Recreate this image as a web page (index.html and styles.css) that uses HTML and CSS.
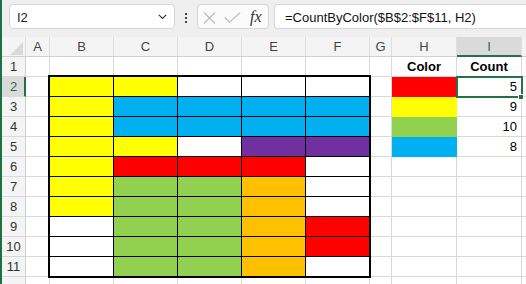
FILE: index.html
```html
<!DOCTYPE html>
<html>
<head>
<meta charset="utf-8">
<link rel="stylesheet" href="styles.css">
</head>
<body>
<div class="app">
  <div class="toolbar">
    <div class="namebox">
      <span class="name">I2</span>
      <svg class="chev" width="9" height="6" viewBox="0 0 9 6"><path d="M0.8 0.8 L4.5 4.5 L8.2 0.8" fill="none" stroke="#333" stroke-width="1.1"/></svg>
    </div>
    <div class="dots"><span></span><span></span><span></span></div>
    <div class="fbtns">
      <svg class="xic" width="13" height="12" viewBox="0 0 13 12"><path d="M1 0.5 L12 11.5 M12 0.5 L1 11.5" stroke="#bcbcbc" stroke-width="1.2" fill="none"/></svg>
      <svg class="chk" width="17" height="11" viewBox="0 0 17 11"><path d="M0.8 5.5 L5.5 10.2 L16.2 0.6" stroke="#bcbcbc" stroke-width="1.2" fill="none"/></svg>
      <span class="fx">fx</span>
    </div>
    <div class="formula">=CountByColor($B$2:$F$11, H2)</div>
  </div>
  <div class="sheet">
    <!-- header row -->
    <div class="c hd corner"><svg width="13" height="13" viewBox="0 0 13 13"><path d="M13 0 L13 13 L0 13 Z" fill="#d9d9d9"/></svg></div>
    <div class="c hd">A</div>
    <div class="c hd">B</div>
    <div class="c hd">C</div>
    <div class="c hd">D</div>
    <div class="c hd">E</div>
    <div class="c hd">F</div>
    <div class="c hd">G</div>
    <div class="c hd">H</div>
    <div class="c hd hd-sel">I</div>
    <div class="c hd"></div>

    <!-- row 1 -->
    <div class="c rh">1</div>
    <div class="c"></div>
    <div class="c"></div>
    <div class="c"></div>
    <div class="c"></div>
    <div class="c"></div>
    <div class="c"></div>
    <div class="c"></div>
    <div class="c bold center">Color</div>
    <div class="c bold center">Count</div>
    <div class="c"></div>

    <!-- B2:F11 range -->
    <div class="range">
      <div class="k y"></div><div class="k y"></div><div class="k"></div><div class="k"></div><div class="k"></div>
      <div class="k y"></div><div class="k bl"></div><div class="k bl"></div><div class="k bl"></div><div class="k bl"></div>
      <div class="k y"></div><div class="k bl"></div><div class="k bl"></div><div class="k bl"></div><div class="k bl"></div>
      <div class="k y"></div><div class="k y"></div><div class="k"></div><div class="k p"></div><div class="k p"></div>
      <div class="k y"></div><div class="k r"></div><div class="k r"></div><div class="k r"></div><div class="k"></div>
      <div class="k y"></div><div class="k g"></div><div class="k g"></div><div class="k o"></div><div class="k"></div>
      <div class="k y"></div><div class="k g"></div><div class="k g"></div><div class="k o"></div><div class="k"></div>
      <div class="k"></div><div class="k g"></div><div class="k g"></div><div class="k o"></div><div class="k r"></div>
      <div class="k"></div><div class="k g"></div><div class="k g"></div><div class="k o"></div><div class="k r"></div>
      <div class="k"></div><div class="k g"></div><div class="k g"></div><div class="k o"></div><div class="k"></div>
    </div>

    <!-- row 2 -->
    <div class="c rh rh-sel">2</div>
    <div class="c"></div>
    <div class="c"></div>
    <div class="c fill r"></div>
    <div class="c num sel">5</div>
    <div class="c"></div>
    <!-- row 3 -->
    <div class="c rh">3</div>
    <div class="c"></div>
    <div class="c"></div>
    <div class="c fill y"></div>
    <div class="c num">9</div>
    <div class="c"></div>
    <!-- row 4 -->
    <div class="c rh">4</div>
    <div class="c"></div>
    <div class="c"></div>
    <div class="c fill g"></div>
    <div class="c num">10</div>
    <div class="c"></div>
    <!-- row 5 -->
    <div class="c rh">5</div>
    <div class="c"></div>
    <div class="c"></div>
    <div class="c fill bl"></div>
    <div class="c num">8</div>
    <div class="c"></div>
    <!-- row 6 -->
    <div class="c rh">6</div>
    <div class="c"></div>
    <div class="c"></div>
    <div class="c"></div>
    <div class="c"></div>
    <div class="c"></div>
    <!-- row 7 -->
    <div class="c rh">7</div>
    <div class="c"></div>
    <div class="c"></div>
    <div class="c"></div>
    <div class="c"></div>
    <div class="c"></div>
    <!-- row 8 -->
    <div class="c rh">8</div>
    <div class="c"></div>
    <div class="c"></div>
    <div class="c"></div>
    <div class="c"></div>
    <div class="c"></div>
    <!-- row 9 -->
    <div class="c rh">9</div>
    <div class="c"></div>
    <div class="c"></div>
    <div class="c"></div>
    <div class="c"></div>
    <div class="c"></div>
    <!-- row 10 -->
    <div class="c rh">10</div>
    <div class="c"></div>
    <div class="c"></div>
    <div class="c"></div>
    <div class="c"></div>
    <div class="c"></div>
    <!-- row 11 -->
    <div class="c rh">11</div>
    <div class="c"></div>
    <div class="c"></div>
    <div class="c"></div>
    <div class="c"></div>
    <div class="c"></div>
    <!-- row 12 -->
    <div class="c rh"></div>
    <div class="c"></div>
    <div class="c"></div>
    <div class="c"></div>
    <div class="c"></div>
    <div class="c"></div>
    <div class="c"></div>
    <div class="c"></div>
    <div class="c"></div>
    <div class="c"></div>
    <div class="c"></div>
  </div>
</div>
</body>
</html>
```

FILE: styles.css
```css
html, body {
  margin: 0;
  padding: 0;
  background: #ffffff;
  overflow: hidden;
}

body {
  font-family: "Liberation Sans", Arial, sans-serif;
  color: #000;
}

.app {
  border-left: 2px solid #1e7145;
  height: 284px;
  box-sizing: border-box;
  overflow: hidden;
}

/* ---------- formula toolbar ---------- */
.toolbar {
  height: 37px;
  box-sizing: border-box;
  background: #efefef;
  display: flex;
  align-items: flex-start;
  padding: 4px 0 0 7px;
}

.namebox {
  width: 166px;
  height: 25px;
  box-sizing: border-box;
  border: 1px solid #d5d5d5;
  border-radius: 4px;
  background: #fff;
  display: flex;
  align-items: center;
  justify-content: space-between;
  padding: 2px 7px 0 7px;
  font-size: 13px;
  color: #222;
}

.chev {
  display: block;
  margin-top: -1px;
}

.dots {
  margin-left: 10px;
  padding-top: 9px;
  display: flex;
  flex-direction: column;
  gap: 2px;
}

.dots span {
  display: block;
  width: 2px;
  height: 2px;
  background: #444;
}

.fbtns {
  margin-left: 10px;
  width: 72px;
  height: 25px;
  box-sizing: border-box;
  border: 1px solid #d5d5d5;
  border-radius: 4px;
  background: #fbfbfb;
  display: flex;
  align-items: center;
  padding-left: 5px;
}

.xic {
  display: block;
  margin-top: 2px;
}

.chk {
  display: block;
  margin-left: 8px;
  margin-top: 1px;
}

.fx {
  margin-left: 9px;
  font-family: "Liberation Serif", "Times New Roman", serif;
  font-style: italic;
  font-size: 16px;
  color: #333;
  margin-top: 1px;
}

.formula {
  margin-left: 5px;
  flex: 1;
  height: 25px;
  box-sizing: border-box;
  border: 1px solid #d5d5d5;
  border-right: none;
  border-radius: 4px 0 0 4px;
  background: #fff;
  display: flex;
  align-items: center;
  padding: 2px 0 0 10px;
  font-size: 13px;
  color: #111;
  white-space: nowrap;
}

/* ---------- grid ---------- */
.sheet {
  display: grid;
  grid-template-columns: 24px 24px repeat(5, 64px) 22px 65px 65px 1fr;
  grid-auto-rows: 20px;
}

.c {
  box-sizing: border-box;
  border-right: 1px solid #d9d9d9;
  border-bottom: 1px solid #d9d9d9;
  font-size: 13px;
  display: flex;
  align-items: center;
  padding: 0 4px;
  min-width: 0;
  overflow: visible;
}

.hd {
  background: #f4f4f4;
  color: #444;
  justify-content: center;
  font-size: 13px;
  border-right-color: #dedede;
  border-bottom-color: #d0d0d0;
  padding: 0;
}

.corner {
  justify-content: flex-end;
  align-items: flex-end;
  padding: 0 2px 1px 0;
}

.corner svg {
  display: block;
}

.hd-sel {
  background: #dadada;
  color: #1e6e42;
  border-bottom: 2px solid #217346;
  padding-top: 1px;
}

.rh {
  background: #f4f4f4;
  color: #333;
  justify-content: center;
  padding: 0;
  border-right-color: #d0d0d0;
}

.rh-sel {
  background: #dadada;
  color: #1e6e42;
  border-right: 2px solid #217346;
  padding-left: 1px;
}

.bold {
  font-weight: bold;
}

.center {
  justify-content: center;
}

.num {
  justify-content: flex-end;
}

.fill {
  border-color: transparent;
}

.sel {
  position: relative;
  z-index: 2;
  outline: 2px solid #217346;
  outline-offset: -1px;
}

.sel::after {
  content: "";
  position: absolute;
  right: -3px;
  bottom: -4px;
  width: 4px;
  height: 4px;
  background: #217346;
  border: 1px solid #fff;
}

/* B2:F11 bordered range */
.range {
  grid-column: 3 / 8;
  grid-row: 3 / 13;
  margin: -1px 0 0 -1px;
  border-left: 1px solid #000;
  border-top: 1px solid #000;
  outline: 1px solid #000;
  display: grid;
  grid-template-columns: repeat(5, 64px);
  grid-template-rows: repeat(10, 20px);
  position: relative;
  z-index: 1;
  background: #fff;
}

.k {
  box-sizing: border-box;
  border-right: 1px solid #000;
  border-bottom: 1px solid #000;
}

.y { background: #ffff00; }
.bl { background: #00b0f0; }
.r { background: #ff0000; }
.g { background: #92d050; }
.o { background: #ffc000; }
.p { background: #7030a0; }
```
